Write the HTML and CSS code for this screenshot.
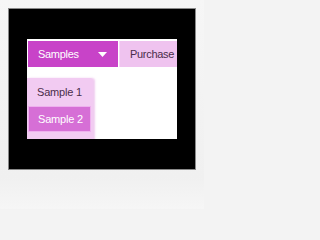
FILE: index.html
```html
<!DOCTYPE html>
<html>
<head>
<meta charset="utf-8">
<link rel="stylesheet" href="styles.css">
</head>
<body>
<div class="page">
  <div class="frame">
    <div class="panel">
      <div class="menubar">
        <div class="item active">
          <span class="label">Samples</span>
          <svg class="arrow" width="9" height="5" viewBox="0 0 9 5"><polygon points="0,0 9,0 4.5,5" fill="#fff"/></svg>
        </div>
        <div class="item light"><span class="label">Purchase</span></div>
      </div>
      <div class="dropdown">
        <div class="dd-item">Sample 1</div>
        <div class="dd-item sel">Sample 2</div>
      </div>
    </div>
  </div>
</div>
</body>
</html>
```
FILE: styles.css
```css
html, body {
  margin: 0;
  padding: 0;
  background: #f3f3f3;
}
.page {
  width: 204px;
  height: 209px;
  padding: 8px 0 0 8px;
  box-sizing: border-box;
  background: linear-gradient(#f6f6f6, #f0f0f0 85%, #f6f6f6);
}
.frame {
  width: 188px;
  height: 162px;
  box-sizing: border-box;
  border: 1px solid #8a8a8a;
  background: #000;
  padding: 30px 0 0 18px;
}
.panel {
  position: relative;
  width: 150px;
  height: 100px;
  background: #fff;
  overflow: hidden;
  padding-top: 2px;
  box-sizing: border-box;
}
.menubar {
  display: flex;
  gap: 1px;
  padding-left: 1px;
  height: 26px;
}
.item {
  display: flex;
  flex-shrink: 0;
  align-items: center;
  height: 26px;
  box-sizing: border-box;
  font-family: "Liberation Sans", Arial, sans-serif;
  font-size: 11px;
  letter-spacing: -0.3px;
}
.item.active {
  width: 90px;
  background: #c843c8;
  color: #fff;
  padding-left: 10px;
}
.item.active .arrow {
  margin-left: 19px;
  margin-top: 1px;
}
.item.light {
  width: 70px;
  background: #efc3ef;
  color: #4a2d4a;
  padding-left: 10px;
  border-left: 1px solid #f6d8f6;
}
.dropdown {
  position: absolute;
  left: 0;
  top: 39px;
  width: 66px;
  height: 70px;
  background: #f2cbf2;
  border-top-right-radius: 3px;
  box-shadow: 2px 0 2px rgba(230, 170, 230, 0.6);
  padding-top: 1px;
  box-sizing: border-box;
  font-family: "Liberation Sans", Arial, sans-serif;
  font-size: 11px;
  letter-spacing: -0.2px;
}
.dd-item {
  height: 27px;
  line-height: 27px;
  padding-left: 10px;
  color: #4a2d4a;
}
.dd-item.sel {
  margin-left: 1px;
  width: 63px;
  height: 26px;
  line-height: 24px;
  box-sizing: border-box;
  padding-left: 9px;
  background: #d66fd6;
  color: #fff;
  border: 1px solid #eeb0ee;
}
```
